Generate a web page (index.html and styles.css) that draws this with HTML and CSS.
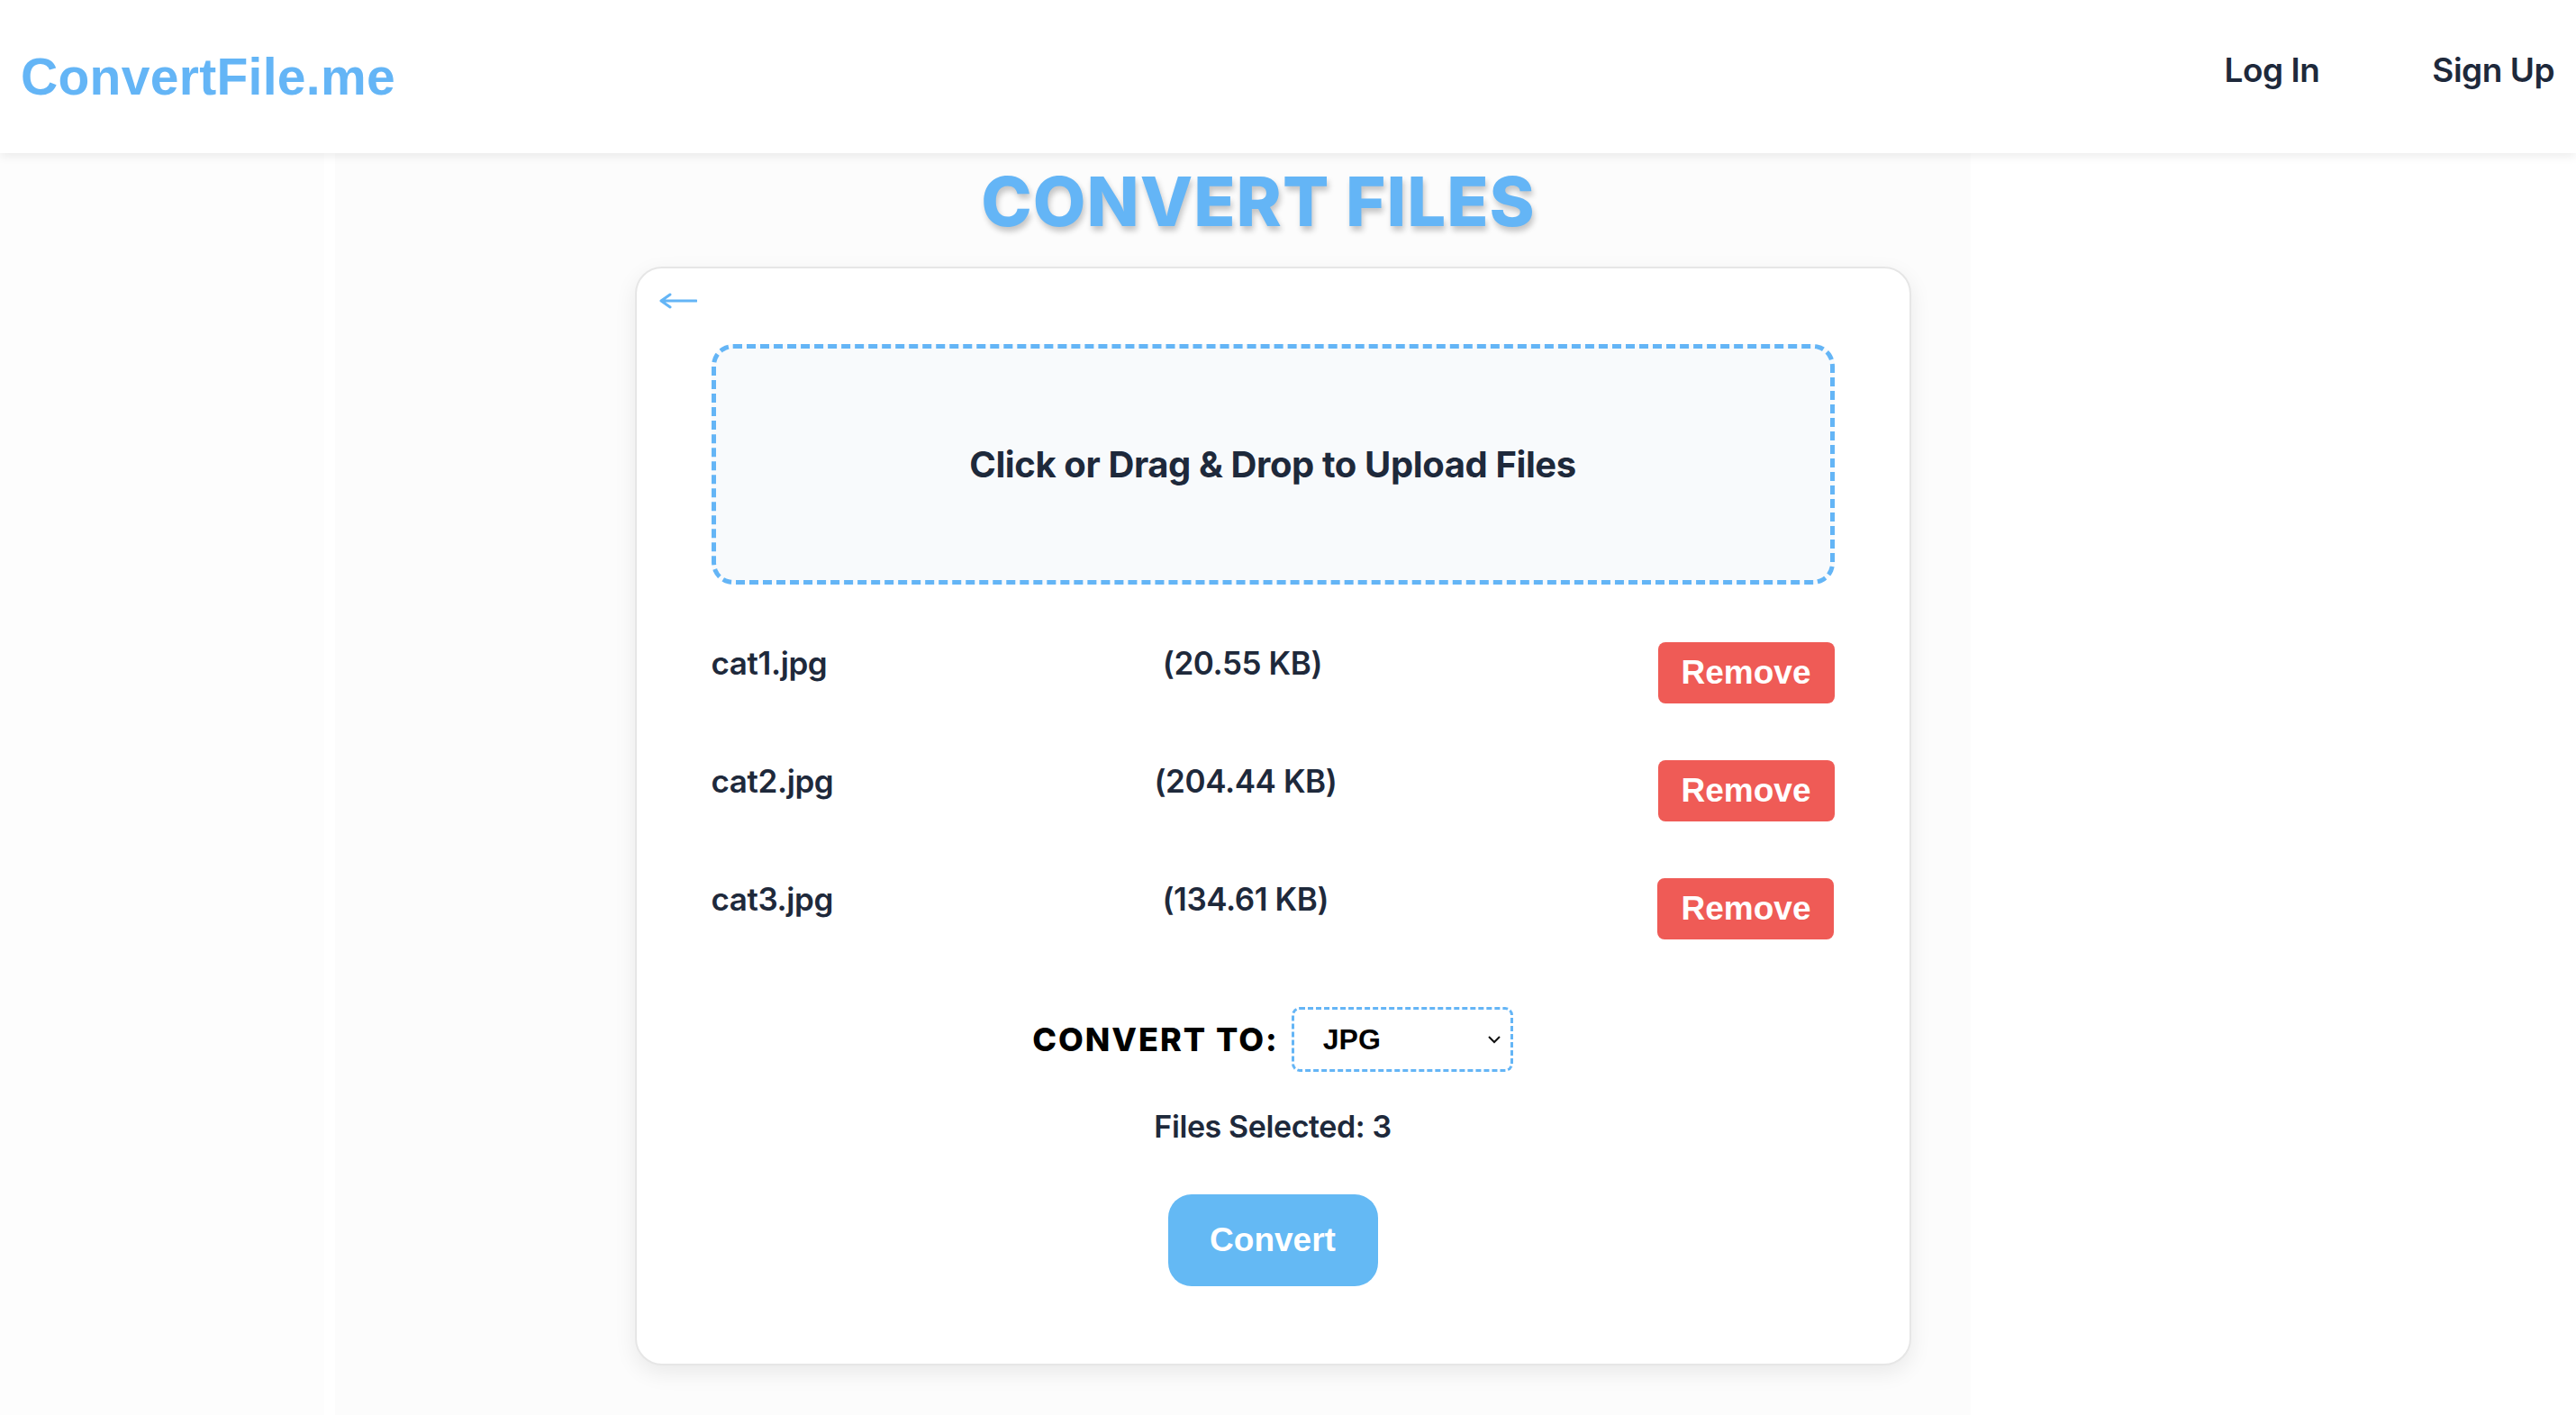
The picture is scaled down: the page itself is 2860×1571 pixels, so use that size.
FILE: index.html
```html
<!DOCTYPE html>
<html lang="en">
<head>
<meta charset="utf-8">
<title>ConvertFile.me</title>
<link rel="stylesheet" href="styles.css">
</head>
<body>
<header class="topbar">
  <a class="logo" href="#">ConvertFile.me</a>
  <nav class="nav">
    <a href="#" class="nav-link">Log In</a>
    <a href="#" class="nav-link">Sign Up</a>
  </nav>
</header>
<main class="main">
  <h1 class="title">CONVERT FILES</h1>
  <section class="card">
    <a href="#" class="back" aria-label="Back">
      <svg width="42" height="20" viewBox="0 0 42 20"><path d="M2 10 H41 M12 3 L2 10 L12 17" fill="none" stroke="#64b5f6" stroke-width="3" stroke-linecap="round" stroke-linejoin="round"/></svg>
    </a>
    <div class="dropzone">Click or Drag &amp; Drop to Upload Files</div>
    <ul class="files">
      <li class="file"><span class="file-name">cat1.jpg</span><span class="file-size">(20.55 KB)</span><button class="remove">Remove</button></li>
      <li class="file"><span class="file-name">cat2.jpg</span><span class="file-size">(204.44 KB)</span><button class="remove">Remove</button></li>
      <li class="file"><span class="file-name">cat3.jpg</span><span class="file-size">(134.61 KB)</span><button class="remove">Remove</button></li>
    </ul>
    <div class="convert-to">
      <span class="convert-label">CONVERT TO:</span>
      <div class="select">
        <span class="select-value">JPG</span>
        <svg class="chevron" width="16" height="10" viewBox="0 0 16 10"><path d="M2 2 L8 8 L14 2" fill="none" stroke="#111" stroke-width="2"/></svg>
      </div>
    </div>
    <p class="count">Files Selected: 3</p>
    <div class="actions"><button class="convert">Convert</button></div>
  </section>
</main>
</body>
</html>
```
FILE: styles.css
```css
* { box-sizing: border-box; }
html, body { margin: 0; padding: 0; }
body {
  background: linear-gradient(to right, #fdfdfd 0, #fdfdfd 360px, #ffffff 360px, #ffffff 372px, #fcfcfc 372px, #fcfcfc 2188px, #ffffff 2188px);
  font-family: "Inter", "Noto Sans", sans-serif;
  color: #1e293b;
  min-height: 1571px;
}
a { text-decoration: none; color: inherit; }

.topbar {
  height: 170px;
  background: #fff;
  display: flex;
  align-items: center;
  justify-content: space-between;
  padding: 0 24px 0 23px;
  box-shadow: 0 4px 10px rgba(0, 0, 0, 0.07);
  position: relative;
  z-index: 2;
}
.logo {
  font-family: "Liberation Sans", Arial, sans-serif;
  font-weight: 700;
  font-size: 57px;
  color: #64b5f6;
  letter-spacing: 0.3px;
}
.nav {
  display: flex;
  gap: 125px;
  margin-bottom: 16px;
}
.nav-link {
  font-size: 37px;
  font-weight: 600;
  color: #1e293b;
  letter-spacing: -0.5px;
}

.main {
  padding: 8px 34px 40px 0;
  display: flex;
  flex-direction: column;
  align-items: center;
}
.title {
  margin: 0 0 28px;
  margin-left: -32px;
  font-size: 76px;
  font-weight: 800;
  line-height: 90px;
  letter-spacing: 1px;
  color: #64b5f6;
  text-shadow: 2px 5px 6px rgba(0, 0, 0, 0.22);
}
.card {
  position: relative;
  width: 1417px;
  background: #fff;
  border: 2px solid #e6e6e6;
  border-radius: 30px;
  box-shadow: 0 8px 24px rgba(0, 0, 0, 0.08);
  padding: 84px 83px 86px;
}
.back {
  position: absolute;
  left: 25px;
  top: 26px;
  display: block;
  line-height: 0;
}
.dropzone {
  height: 267px;
  border: 5px dashed #64b5f6;
  border-radius: 24px;
  background: #f8fafc;
  display: flex;
  align-items: center;
  justify-content: center;
  font-size: 40px;
  font-weight: 700;
  color: #1e293b;
  letter-spacing: -0.4px;
}
.files {
  list-style: none;
  margin: 64px 0 0;
  padding: 0;
  display: flex;
  flex-direction: column;
  gap: 63px;
}
.file {
  display: flex;
  align-items: flex-start;
  justify-content: space-between;
  height: 68px;
}
.file-name, .file-size {
  font-size: 35px;
  font-weight: 600;
  line-height: 46px;
  color: #1e293b;
  letter-spacing: -0.4px;
}
.remove {
  width: 196px;
  height: 68px;
  border: 0;
  border-radius: 8px;
  background: #ef5b56;
  color: #fff;
  font-family: "Liberation Sans", Arial, sans-serif;
  font-weight: 700;
  font-size: 37px;
  padding: 0;
  cursor: pointer;
}
.convert-to {
  margin-top: 75px;
  display: flex;
  align-items: center;
  justify-content: center;
  gap: 14px;
}
.convert-label {
  font-size: 36px;
  font-weight: 800;
  color: #000;
  letter-spacing: 2px;
}
.select {
  width: 246px;
  height: 72px;
  border: 3px dashed #64b5f6;
  border-radius: 9px;
  display: flex;
  align-items: center;
  justify-content: space-between;
  padding: 0 10px 0 32px;
  background: #fff;
}
.select-value {
  font-family: "Liberation Sans", Arial, sans-serif;
  font-weight: 700;
  font-size: 32px;
  color: #000;
}
.count {
  margin: 36px 0 0;
  text-align: center;
  font-size: 34px;
  font-weight: 600;
  line-height: 50px;
  color: #1e293b;
  letter-spacing: -0.4px;
}
.actions {
  display: flex;
  justify-content: center;
  margin-top: 50px;
}
.convert {
  width: 233px;
  height: 102px;
  border: 0;
  border-radius: 26px;
  background: #64b9f4;
  color: #fff;
  font-family: "Liberation Sans", Arial, sans-serif;
  font-weight: 700;
  font-size: 37px;
  padding: 0;
  cursor: pointer;
}
```
